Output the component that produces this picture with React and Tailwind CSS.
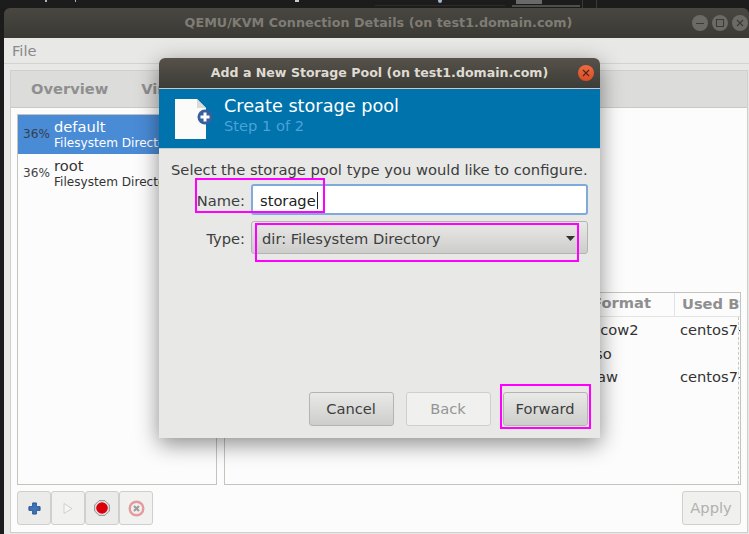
const F = { fontFamily: '"DejaVu Sans", sans-serif' };

function Btn({ children, disabled, className = "" }) {
  return (
    <div className={`flex items-center justify-center rounded-[3px] border pr-px text-[14.67px] ${disabled ? "border-[#cfcfcb] bg-[#f0f0ef] text-[#959595]" : "border-[#b5b5b0] bg-gradient-to-b from-[#e9e9e8] to-[#cdcdcb] text-[#3d3d3d]"} ${className}`}>
      {children}
    </div>
  );
}

function ToolBtn({ children, disabled }) {
  return (
    <div className={`flex h-[34px] w-[34px] items-center justify-center rounded-[3px] border border-[#cfcfcb] ${disabled ? "bg-[#f1f1f0]" : "bg-[#ebebea]"}`}>
      {children}
    </div>
  );
}

function PoolRow({ name, active }) {
  return (
    <div className={`flex h-[39px] items-center ${active ? "bg-[#4a8bd6]" : ""}`}>
      <div className={`w-[36px] pl-[5px] text-[12.1px] ${active ? "text-[#33404f]" : "text-[#444]"}`}>36%</div>
      <div className="flex flex-col">
        <div className={`-mt-[1px] text-[14.67px] leading-[17px] ${active ? "text-white" : "text-[#333]"}`}>{name}</div>
        <div className={`mt-[1px] whitespace-nowrap text-[12.1px] leading-[15px] ${active ? "text-white" : "text-[#333]"}`}>Filesystem Directory</div>
      </div>
    </div>
  );
}

function WinCtl({ children }) {
  return <div className="flex h-[16px] w-[16px] items-center justify-center rounded-full bg-[#6c6a64]">{children}</div>;
}

export default function App() {
  return (
    <div className="relative flex h-[534px] w-[749px] flex-col overflow-hidden bg-[#1b1b1b] pl-[4px]" style={F}>
      <div className="relative -ml-[4px] h-[8px] shrink-0 overflow-hidden bg-[#1c1c1c]">
        <div className="absolute left-[45px] top-0 h-[2px] w-[2px] bg-[#aab4c0]" />
        <div className="absolute left-[75px] top-0 h-[2px] w-[1px] bg-[#aab4c0]" />
        <div className="absolute left-[295px] top-0 h-[2px] w-[4px] bg-[#c8c8c8]" />
        <div className="absolute left-[438px] top-0 h-[3px] w-[4px] rounded-b bg-[#9fb4cc]" />
        <div className="absolute left-[375px] top-[5px] h-px w-[130px] bg-[#2c2c2c]" />
        <div className="absolute left-[516px] top-0 h-[4px] w-[26px] bg-[#6a6a6a]" />
        <div className="absolute left-[512px] top-[5px] h-[2px] w-[68px] bg-[#4f4f4f]" />
        <div className="absolute left-[582px] top-0 h-[8px] w-px bg-[#3a3a3a]" />
        <div className="absolute left-[596px] top-0 h-[8px] w-px bg-[#3a3a3a]" />
      </div>

      <div className="flex flex-1 flex-col overflow-hidden rounded-t-[6px]">
        <div className="relative flex h-[30px] shrink-0 items-center justify-center bg-gradient-to-b from-[#4a4741] to-[#3a3934] pl-[4px] text-[12.75px] font-bold text-[#7f7c75]">
          QEMU/KVM Connection Details (on test1.domain.com)
          <div className="absolute right-[1px] top-[7px] flex gap-[4px]">
            <WinCtl><div className="h-px w-[8px] bg-[#3b3a35]" /></WinCtl>
            <WinCtl><div className="h-[8px] w-[8px] border border-[#3b3a35]" /></WinCtl>
            <WinCtl>
              <svg width="8" height="8" viewBox="0 0 8 8"><path d="M1 1l6 6M7 1l-6 6" stroke="#3b3a35" strokeWidth="1.2" /></svg>
            </WinCtl>
          </div>
        </div>

        <div className="flex h-[26px] shrink-0 items-center border-b border-[#d2d2ce] bg-[#e8e8e7] pl-[8px] pt-[1px] text-[14.67px] text-[#8a8a8a]">File</div>

        <div className="flex flex-1 flex-col bg-[#e8e8e7] pb-[1px] pl-[6px] pr-[1px] pt-[6px]">
          <div className="flex flex-1 flex-col border border-[#cfcfcb] bg-[#fcfcfc]">
            <div className="flex h-[37px] shrink-0 items-center gap-[33px] border-b border-[#c9c9c5] bg-[#dcdcda] pl-[20px] text-[14.67px] font-bold text-[#8f8f8f]">
              <span>Overview</span>
              <span>Virtual Networks</span>
            </div>
            <div className="flex flex-1 flex-col px-[6px] pt-[6px]">
              <div className="flex h-[371px] gap-[7px]">
                <div className="h-full w-[200px] shrink-0 overflow-hidden border-[1.5px] border-[#c4c4bf] bg-[#fcfcfc]">
                  <PoolRow name="default" active />
                  <PoolRow name="root" />
                </div>
                <div className="flex h-full flex-1 flex-col justify-end overflow-hidden">
                  <div className="relative h-[193px] overflow-hidden border-b-[1.5px] border-l-[1.5px] border-r border-t border-[#c4c4bf] bg-[#fcfcfc]">
                    <div className="flex h-[24px] items-center border-b border-[#e3e3e1] pb-[2px] text-[14.67px] font-bold text-[#8f8f8f]">
                      <div className="w-[367px] shrink-0" />
                      <div className="h-[24px] w-[83px] shrink-0 border-r border-[#e3e3e1] leading-[22px]">Format</div>
                      <div className="overflow-hidden whitespace-nowrap pl-[7px] leading-[22px]">Used By</div>
                    </div>
                    <div className="pt-[1px] text-[14.67px] leading-[23.5px] text-[#333]">
                      <div className="flex">
                        <div className="w-[366px] shrink-0" />
                        <div className="w-[84px] shrink-0">qcow2</div>
                        <div className="overflow-hidden whitespace-nowrap pl-[5px]">centos7-</div>
                      </div>
                      <div className="flex">
                        <div className="w-[366px] shrink-0" />
                        <div className="w-[84px] shrink-0">iso</div>
                      </div>
                      <div className="flex">
                        <div className="w-[366px] shrink-0" />
                        <div className="w-[84px] shrink-0">raw</div>
                        <div className="overflow-hidden whitespace-nowrap pl-[5px]">centos7-</div>
                      </div>
                    </div>
                    <div className="absolute bottom-0 right-[1px] top-[24px] border-r border-dashed border-[#c8c8c8] bg-[#fcfcfc] pl-px" />
                  </div>
                </div>
              </div>
              <div className="flex items-center justify-between pt-[6px]">
                <div className="flex">
                  <ToolBtn>
                    <svg width="13" height="13" viewBox="0 0 14 14"><path d="M5 1h4v4h4v4H9v4H5V9H1V5h4z" fill="#3f75b8" stroke="#23508f" /></svg>
                  </ToolBtn>
                  <ToolBtn disabled>
                    <svg width="12" height="13" viewBox="0 0 12 13"><path d="M2 1.5l8 5-8 5z" fill="#f6f6f6" stroke="#cfcfcf" /></svg>
                  </ToolBtn>
                  <ToolBtn>
                    <svg width="16" height="16" viewBox="0 0 16 16"><path d="M5 .7h6L15.300 5v6L11 15.300H5L.7 11V5z" fill="#e8e8e8" stroke="#8b8b8b" /><circle cx="8" cy="8" r="5.800" fill="#d9000a" /></svg>
                  </ToolBtn>
                  <ToolBtn disabled>
                    <svg width="17" height="17" viewBox="0 0 17 17"><circle cx="8.500" cy="8.500" r="6.800" fill="#efefee" stroke="#e69a9d" strokeWidth="2.400" /><path d="M6 6l5 5M11 6l-5 5" stroke="#9b9b9b" strokeWidth="2" /></svg>
                  </ToolBtn>
                </div>
                <Btn disabled className="h-[34px] w-[59px]"><span className="text-[#b0b0b0]">Apply</span></Btn>
              </div>
            </div>
          </div>
        </div>
      </div>

      <div className="absolute left-[159px] top-[58px] flex h-[380px] w-[441px] flex-col overflow-hidden rounded-t-[6px] bg-[#e8e8e7] shadow-[0_6px_22px_rgba(0,0,0,0.45)]">
        <div className="relative flex h-[30px] shrink-0 items-center justify-center bg-gradient-to-b from-[#56524a] to-[#3d3c37] text-[12.6px] font-bold text-[#dfdbd2]">
          Add a New Storage Pool (on test1.domain.com)
          <div className="absolute right-[6px] top-[7px] flex h-[16px] w-[16px] items-center justify-center rounded-full bg-gradient-to-b from-[#ee6a42] to-[#d84c22]">
            <svg width="8" height="8" viewBox="0 0 8 8"><path d="M1 1l6 6M7 1l-6 6" stroke="#4a2417" strokeWidth="1.100" /></svg>
          </div>
        </div>
        <div className="flex h-[61px] shrink-0 items-center border-y border-[#c9c9c6] bg-[#0072ac] pl-[16px]">
          <svg width="38" height="44" viewBox="0 0 38 44" className="shrink-0">
            <path d="M0 2h22l9 9v31H0z" fill="#fbfbf9" />
            <path d="M22 2l9 9h-9z" fill="#dcdcd6" />
            <circle cx="30" cy="20" r="7.500" fill="#3a5f9e" />
            <path d="M30 15.500v9M25.500 20h9" stroke="#fff" strokeWidth="3" />
          </svg>
          <div className="ml-[11px] flex -translate-y-[4px] flex-col">
            <div className="text-[17.7px] leading-[22px] text-white">Create storage pool</div>
            <div className="text-[14.67px] leading-[18px] text-[#4aa3d8]">Step 1 of 2</div>
          </div>
        </div>
        <div className="flex flex-1 flex-col pl-[12px] pr-[12px] pt-[12px]">
          <div className="whitespace-nowrap text-[14.73px] leading-[18px] text-[#3d3d3d]">Select the storage pool type you would like to configure.</div>
          <div className="mt-[5px] flex items-center">
            <div className="w-[74px] shrink-0 pt-[2px] text-right text-[14.67px] text-[#3d3d3d]">Name:</div>
            <div className="ml-[6px] flex h-[31px] w-[337px] items-center rounded-[3px] border-2 border-[#7faad9] bg-white pl-[7px] pt-[2px] text-[14.67px] text-[#222]">
              storage<span className="ml-px inline-block h-[17px] w-px bg-[#222]" />
            </div>
          </div>
          <div className="mt-[6px] flex items-center">
            <div className="w-[74px] shrink-0 pt-[2px] text-right text-[14.67px] text-[#3d3d3d]">Type:</div>
            <div className="ml-[6px] flex h-[33px] w-[337px] items-center justify-between rounded-[3px] border border-[#b5b5b0] bg-gradient-to-b from-[#e9e9e8] to-[#cdcdcb] pl-[10px] pr-[12px] pt-[2px] text-[14.67px] text-[#3d3d3d]">
              dir: Filesystem Directory
              <svg width="9" height="5" viewBox="0 0 9 5"><path d="M0 0h9L4.500 5z" fill="#333" /></svg>
            </div>
          </div>
          <div className="mt-auto flex justify-end gap-[12px] pb-[12px]">
            <Btn className="h-[34px] w-[85px]">Cancel</Btn>
            <Btn disabled className="h-[34px] w-[85px]">Back</Btn>
            <Btn className="h-[34px] w-[85px]">Forward</Btn>
          </div>
        </div>
      </div>

      <div className="absolute left-[195px] top-[178px] h-[35px] w-[130px] border-2 border-[#ff00ff]" />
      <div className="absolute left-[255px] top-[223px] h-[39px] w-[324px] border-2 border-[#ff00ff]" />
      <div className="absolute left-[500px] top-[384px] h-[45px] w-[91px] border-2 border-[#ff00ff]" />
    </div>
  );
}
